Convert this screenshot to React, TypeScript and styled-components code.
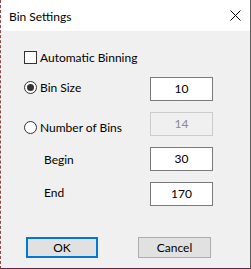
import React from "react"
import styled, { createGlobalStyle } from "styled-components"

const GlobalStyle = createGlobalStyle`
  html, body {
    margin: 0;
    padding: 0;
    background: #f0f0f0;
  }
  * {
    box-sizing: border-box;
  }
`

const Window = styled.div`
  width: 251px;
  height: 269px;
  display: flex;
  flex-direction: column;
  background: #f0f0f0;
  border-left: 1px dashed #8a4a4a;
  border-right: 1px solid #5f5f5f;
  border-bottom: 1px solid #5c2448;
  font-family: Lato, "Noto Sans", sans-serif;
  font-size: 12px;
  color: #000;
  overflow: hidden;
`

const TitleBar = styled.div`
  height: 31px;
  flex: none;
  display: flex;
  align-items: center;
  justify-content: space-between;
  padding: 0 9px 0 8px;
  background: #fff;
`

const Title = styled.span`
  font-size: 12px;
  margin-top: 1px;
`

const CloseButton = styled.button`
  width: 12px;
  height: 12px;
  padding: 0;
  border: none;
  background: none;
  display: flex;
  align-items: center;
  justify-content: center;
`

const Body = styled.div`
  flex: 1;
  display: flex;
  flex-direction: column;
  padding: 20px 37px 0 23px;
`

const CheckRow = styled.label`
  display: flex;
  align-items: center;
  gap: 3px;
  height: 13px;
  margin-bottom: 13px;
`

const CheckBox = styled.span`
  width: 13px;
  height: 13px;
  border: 1px solid #333;
  background: #fff;
`

const Grid = styled.div`
  display: grid;
  grid-template-columns: 1fr 63px;
  grid-auto-rows: 24px;
  row-gap: 11px;
`

const OptionLabel = styled.label<{ $indent?: boolean; $offset: number }>`
  display: flex;
  align-items: center;
  gap: 3px;
  height: 24px;
  padding-left: ${({ $indent }) => ($indent ? "20px" : "0")};
  margin-top: ${({ $offset }) => $offset}px;
`

const Radio = styled.span<{ $checked?: boolean }>`
  width: 13px;
  height: 13px;
  border-radius: 50%;
  border: 1px solid #333;
  background: #fff;
  display: flex;
  align-items: center;
  justify-content: center;

  &::after {
    content: "";
    width: 7px;
    height: 7px;
    border-radius: 50%;
    background: #333;
    display: ${({ $checked }) => ($checked ? "block" : "none")};
  }
`

const Field = styled.div<{ $disabled?: boolean }>`
  height: 24px;
  border: 1px solid ${({ $disabled }) => ($disabled ? "#cccccc" : "#7a7a7a")};
  background: ${({ $disabled }) => ($disabled ? "#f0f0f0" : "#fff")};
  color: ${({ $disabled }) => ($disabled ? "#8a8a8a" : "#000")};
  display: flex;
  justify-content: center;
  padding-top: 3px;
  line-height: 15px;
`

const ButtonRow = styled.div`
  display: flex;
  gap: 40px;
  padding-left: 2px;
  margin-top: 31px;
`

const DialogButton = styled.button<{ $primary?: boolean }>`
  height: 21px;
  width: ${({ $primary }) => ($primary ? "72px" : "73px")};
  font-family: inherit;
  font-size: 12px;
  color: #000;
  background: #e1e1e1;
  border: ${({ $primary }) => ($primary ? "2px solid #0078d7" : "1px solid #adadad")};
  padding: 0;
  line-height: 17px;
`

export default function App() {
  return (
    <>
      <GlobalStyle />
      <Window>
        <TitleBar>
          <Title>Bin Settings</Title>
          <CloseButton aria-label="Close">
            <svg width="11" height="11" viewBox="0 0 11 11">
              <path d="M0.5 0.5L10.5 10.5M10.5 0.5L0.5 10.5" stroke="#000" strokeWidth="1" />
            </svg>
          </CloseButton>
        </TitleBar>
        <Body>
          <CheckRow>
            <CheckBox />
            Automatic Binning
          </CheckRow>
          <Grid>
            <OptionLabel $offset={-2}>
              <Radio $checked />
              Bin Size
            </OptionLabel>
            <Field>10</Field>
            <OptionLabel $offset={3}>
              <Radio />
              Number of Bins
            </OptionLabel>
            <Field $disabled>14</Field>
            <OptionLabel $indent $offset={0}>Begin</OptionLabel>
            <Field>30</Field>
            <OptionLabel $indent $offset={-2}>End</OptionLabel>
            <Field>170</Field>
          </Grid>
          <ButtonRow>
            <DialogButton $primary>OK</DialogButton>
            <DialogButton>Cancel</DialogButton>
          </ButtonRow>
        </Body>
      </Window>
    </>
  )
}
